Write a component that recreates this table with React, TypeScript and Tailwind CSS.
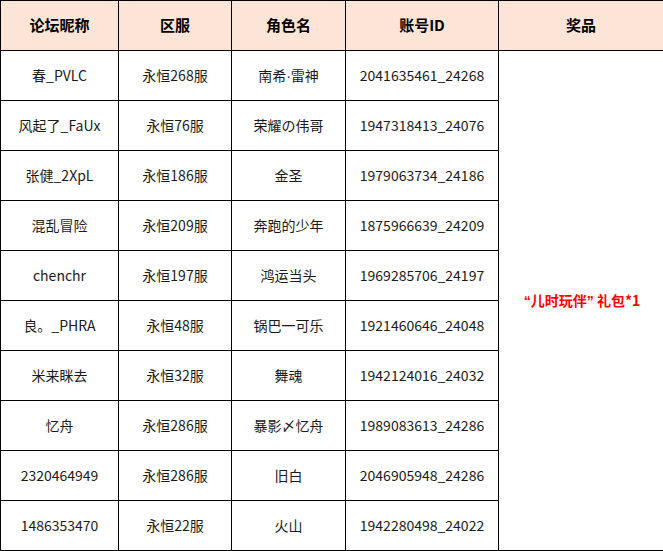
import React from "react";

const latin = { fontFamily: '"Liberation Sans", sans-serif' };

const rows: [React.ReactNode, string, React.ReactNode, string][] = [
  ["春_PVLC", "永恒268服", <>南希<span style={latin}>·</span>雷神</>, "2041635461_24268"],
  ["风起了_FaUx", "永恒76服", "荣耀の伟哥", "1947318413_24076"],
  ["张健_2XpL", "永恒186服", "金圣", "1979063734_24186"],
  ["混乱冒险", "永恒209服", "奔跑的少年", "1875966639_24209"],
  ["chenchr", "永恒197服", "鸿运当头", "1969285706_24197"],
  ["良。_PHRA", "永恒48服", "锅巴一可乐", "1921460646_24048"],
  ["米来眯去", "永恒32服", "舞魂", "1942124016_24032"],
  ["忆舟", "永恒286服", "暴影〆忆舟", "1989083613_24286"],
  ["2320464949", "永恒286服", "旧白", "2046905948_24286"],
  ["1486353470", "永恒22服", "火山", "1942280498_24022"],
];

export default function App() {
  const font = { fontFamily: '"Noto Sans CJK SC", "Noto Sans", sans-serif' };
  return (
    <div className="w-[663px] h-[551px] bg-white" style={font}>
      <table className="border-collapse table-fixed w-[663px] text-[14px] text-[#1a1a1a]">
        <colgroup>
          <col className="w-[118px]" />
          <col className="w-[113px]" />
          <col className="w-[114px]" />
          <col className="w-[153px]" />
          <col className="w-[165px]" />
        </colgroup>
        <thead>
          <tr className="h-[50px] bg-[#fce4d6]">
            {["论坛昵称", "区服", "角色名", "账号ID", "奖品"].map((h) => (
              <th key={h} className="border border-black p-0 text-center font-bold text-[15px] text-black">
                {h}
              </th>
            ))}
          </tr>
        </thead>
        <tbody>
          {rows.map((r, i) => (
            <tr key={i} className="h-[50px]">
              {r.map((c, j) => (
                <td key={j} className="border border-black p-0 text-center">
                  {c}
                </td>
              ))}
              {i === 0 && (
                <td rowSpan={10} className="border border-black p-0 pl-[2px] text-center font-bold text-[#ff0000]">
                  <span style={latin}>“</span>儿时玩伴<span style={latin}>”</span> 礼包*1
                </td>
              )}
            </tr>
          ))}
        </tbody>
      </table>
    </div>
  );
}
